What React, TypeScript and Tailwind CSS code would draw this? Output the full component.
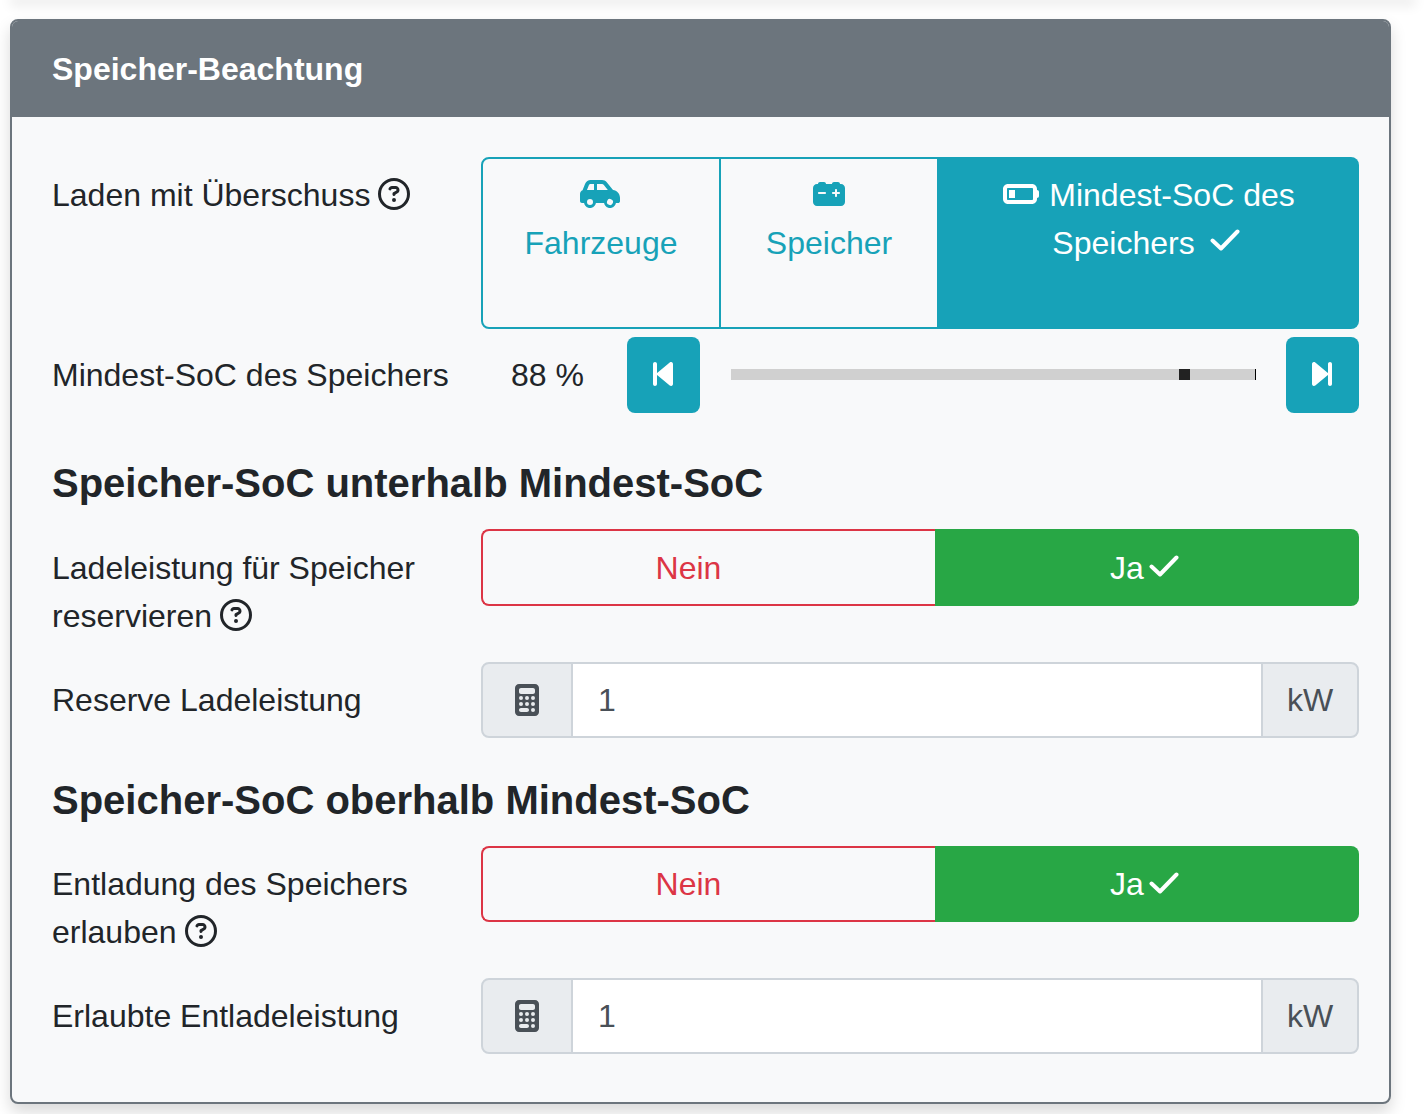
import { FaBackwardStep, FaBatteryQuarter, FaCalculator, FaCarBattery, FaCarSide, FaForwardStep, FaRegCircleQuestion } from 'react-icons/fa6';

const CheckMark = ({ className = '' }: { className?: string }) => (
  <svg viewBox="0 0 30 22" fill="none" stroke="currentColor" strokeWidth="4" strokeLinecap="round" strokeLinejoin="round" className={`inline-block w-[30px] h-[22px] ${className}`}>
    <path d="M2.5 11.5 L11 19.5 L27.5 2.5" />
  </svg>
);

const Help = () => <FaRegCircleQuestion size={32} className="inline-block align-[-4px] ml-2 text-[#212529]" />;

const Label = ({ children, className = '' }: { children: React.ReactNode; className?: string }) => (
  <div className={`w-[429px] shrink-0 pr-5 ${className}`}>{children}</div>
);

const YesNo = ({ className }: { className: string }) => (
  <div className={`flex flex-1 ${className}`}>
    <div className="w-[454px] flex items-center justify-center gap-[11px] border-2 border-r-0 border-[#dc3545] rounded-l-lg text-[#dc3545]">
      Nein
      <CheckMark className="invisible" />
    </div>
    <div className="flex-1 flex items-center justify-center gap-[5px] bg-[#28a745] rounded-r-lg text-white">
      Ja
      <CheckMark className="mr-[5px] -mt-[3px]" />
    </div>
  </div>
);

const NumberInput = () => (
  <div className="flex flex-1 h-[76px] text-[#495057]">
    <div className="w-[92px] flex items-center justify-center pb-[1px] bg-[#e9ecef] border-2 border-[#ced4da] rounded-l-lg">
      <FaCalculator size={32} />
    </div>
    <div className="flex-1 flex items-center bg-white border-y-2 border-[#ced4da] pl-[25px]">1</div>
    <div className="w-[98px] flex items-center justify-center bg-[#e9ecef] border-2 border-[#ced4da] rounded-r-lg">kW</div>
  </div>
);

const Heading = ({ children, className }: { children: React.ReactNode; className: string }) => (
  <h2 className={`text-[40px] leading-[48px] font-bold ${className}`}>{children}</h2>
);

export default function App() {
  return (
    <div className="bg-white min-h-[1114px] overflow-hidden text-[32px] leading-[48px] text-[#212529] font-['Liberation_Sans',Arial,sans-serif]">
      <div className="h-[10px] -mt-[10px] mx-[10px] shadow-[0_6px_12px_rgba(0,0,0,0.08)]" />
      <div className="mt-[19px] ml-[10px] w-[1381px] h-[1085px] border-2 border-[#6c757d] rounded-lg bg-[#f8f9fa] shadow-[0_8px_16px_rgba(0,0,0,0.15)] overflow-hidden">
        <div className="h-[98px] -mt-[2px] pt-[2px] bg-[#6c757d] text-white font-bold flex items-center pl-10">
          Speicher-Beachtung
        </div>
        <div className="pl-10 pr-[30px] pt-10">
          <div className="flex">
            <Label className="pt-[14px]">
              Laden mit Überschuss
              <Help />
            </Label>
            <div className="flex flex-1 h-[172px] text-center text-[#17a2b8]">
              <div className="w-[240px] border-2 border-[#17a2b8] rounded-l-lg pt-3">
                <div className="h-12 flex items-center justify-center pr-[2px] pb-[2px]"><FaCarSide size={32} className="w-10" /></div>
                <div>Fahrzeuge</div>
              </div>
              <div className="w-[218px] border-y-2 border-r-2 border-[#17a2b8] pt-3">
                <div className="h-12 flex items-center justify-center pb-[2px]"><FaCarBattery size={32} /></div>
                <div>Speicher</div>
              </div>
              <div className="flex-1 bg-[#17a2b8] rounded-r-lg text-white pt-[14px] px-10">
                <FaBatteryQuarter size={32} className="inline-block align-[-4px] w-9 mr-[10px]" />
                Mindest-SoC des Speichers
                <CheckMark className="ml-[15px] mr-[6px] align-[3px]" />
              </div>
            </div>
          </div>

          <div className="flex items-center mt-2 h-[76px]">
            <Label>Mindest-SoC des Speichers</Label>
            <div className="flex-1 flex items-center">
              <div className="w-[146px] pl-[30px]">88 %</div>
              <div className="w-[73px] h-[76px] flex items-center justify-center pr-[2px] pb-[2px] bg-[#17a2b8] rounded-lg text-white">
                <FaBackwardStep size={32} />
              </div>
              <div className="relative flex-1 ml-[31px] mr-[30px] mb-[2px] h-[11px] bg-[#d0d0d0] border-r border-black">
                <div className="absolute left-[448px] top-0 w-[11px] h-[11px] bg-[#222]" />
              </div>
              <div className="w-[73px] h-[76px] flex items-center justify-center pr-[2px] pb-[2px] bg-[#17a2b8] rounded-lg text-white">
                <FaForwardStep size={32} />
              </div>
            </div>
          </div>

          <Heading className="mt-[46px] mb-[22px]">Speicher-SoC unterhalb Mindest-SoC</Heading>

          <div className="flex h-[133px]">
            <Label className="pt-[15px]">
              Ladeleistung für Speicher reservieren
              <Help />
            </Label>
            <YesNo className="h-[77px]" />
          </div>

          <div className="flex items-center">
            <Label>Reserve Ladeleistung</Label>
            <NumberInput />
          </div>

          <Heading className="mt-[38px] mb-[22px]">Speicher-SoC oberhalb Mindest-SoC</Heading>

          <div className="flex h-[132px]">
            <Label className="pt-[14px]">
              Entladung des Speichers erlauben
              <Help />
            </Label>
            <YesNo className="h-[76px]" />
          </div>

          <div className="flex items-center">
            <Label>Erlaubte Entladeleistung</Label>
            <NumberInput />
          </div>
        </div>
      </div>
    </div>
  );
}
